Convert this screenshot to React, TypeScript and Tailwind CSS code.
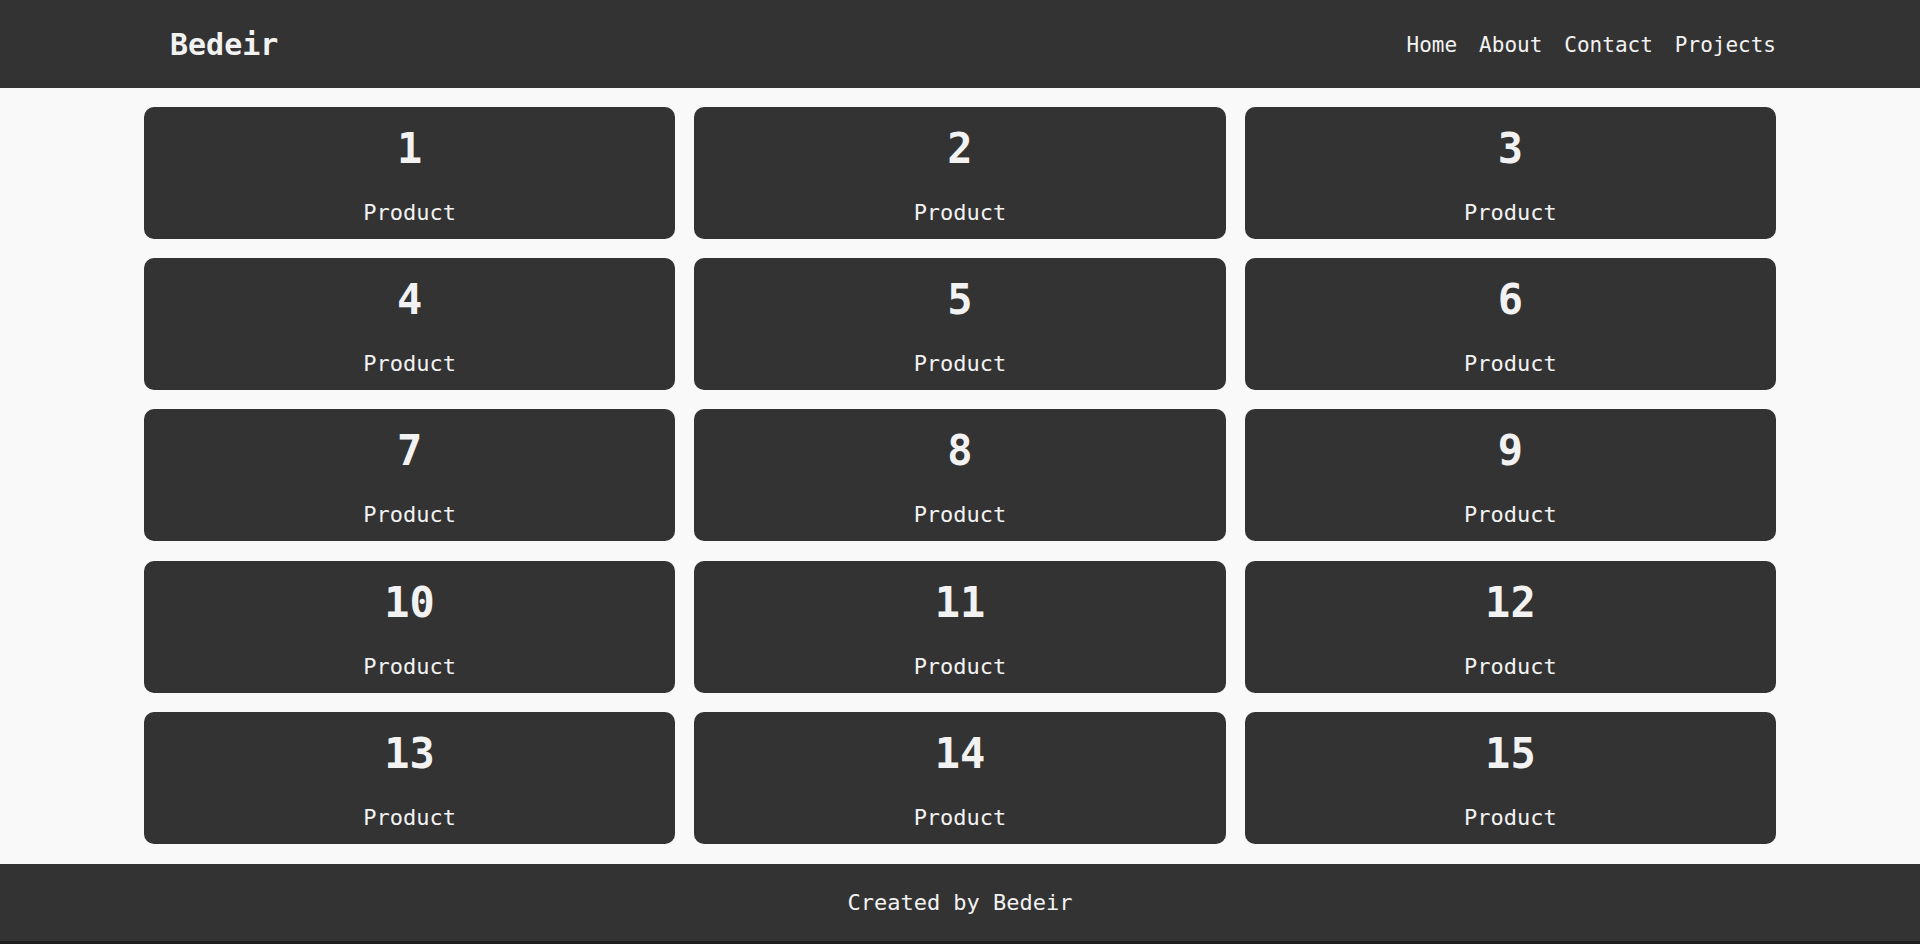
const links = ['Home', 'About', 'Contact', 'Projects'];

const products = Array.from({ length: 15 }, (_, i) => i + 1);

function Card({ n }: { n: number }) {
  return (
    <div className="flex h-[132px] flex-col items-center rounded-[10px] bg-[#333333] pt-[21px] text-[#f2f2f2]">
      <h2 className="text-[42px] leading-[42px] font-bold">{n}</h2>
      <p className="mt-[32px] text-[22px] leading-[22px]">Product</p>
    </div>
  );
}

export default function App() {
  return (
    <div
      className="flex min-h-screen flex-col bg-[#f9f9f9]"
      style={{ fontFamily: '"DejaVu Sans Mono", "Liberation Mono", monospace' }}
    >
      <header className="bg-[#333333] text-[#f2f2f2]">
        <nav className="mx-auto flex h-[88px] w-[85%] items-center justify-between pl-[26px]">
          <h1 className="text-[30px] font-bold">Bedeir</h1>
          <ul className="flex gap-[22px] pt-[4px] text-[21px]">
            {links.map((l) => (
              <li key={l}>
                <a href="#">{l}</a>
              </li>
            ))}
          </ul>
        </nav>
      </header>

      <main className="mx-auto grid w-[85%] grid-cols-3 gap-[19.2px] pt-[19px] pb-[20px]">
        {products.map((n) => (
          <Card key={n} n={n} />
        ))}
      </main>

      <footer className="flex h-[80px] items-center justify-center border-b-[3px] border-[#1e1e1e] bg-[#333333] text-[22px] text-[#f2f2f2]">
        Created by Bedeir
      </footer>
    </div>
  );
}
